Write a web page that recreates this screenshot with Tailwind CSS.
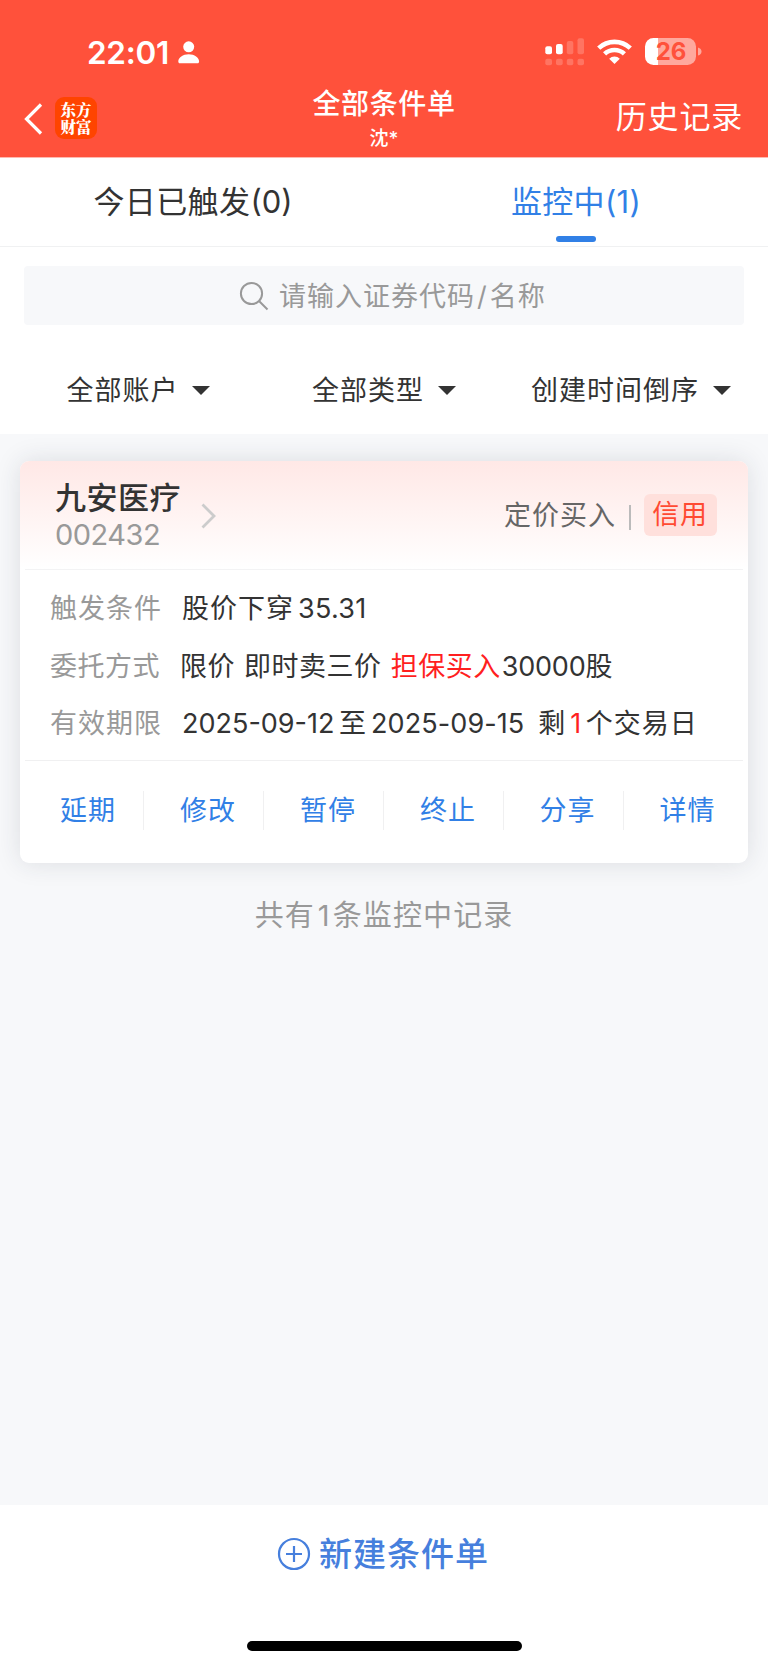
<!DOCTYPE html>
<html lang="zh-CN">
<head>
<meta charset="utf-8">
<title>全部条件单</title>
<script src="https://cdn.jsdelivr.net/npm/@tailwindcss/browser@4"></script>
</head>
<body class="bg-[#f7f8fa]">
<div class="flex h-[1665px] w-[768px] flex-col overflow-hidden bg-[#f7f8fa] font-['Inter','Noto_Sans_CJK_SC',sans-serif] whitespace-nowrap text-[#333]">

  <header class="h-[158px] shrink-0 border-b border-[#ffb9b0] bg-[#ff513b] text-white">
    <!-- status bar -->
    <div class="flex h-[85px] items-start pl-[87px]">
      <div class="mt-[33px] w-[86px] text-[31.500px] leading-[40px] font-semibold tracking-[-0.300px]">22:01</div>
      <svg class="mt-[41px] ml-[5px]" width="22" height="23" viewBox="0 0 22 23" fill="currentColor"><circle cx="10.7" cy="5.8" r="5.5"/><path d="M.3 20.5c0-4 4.6-7.3 10.4-7.3s10.4 3.300 10.400 7.300c0 1-.6 1.800-1.600 1.800H1.900c-1 0-1.600-.8-1.600-1.800z"/></svg>
      <svg class="mt-[38px] ml-[345px]" width="40" height="28" viewBox="0 0 40 28" fill="currentColor"><rect x="0.3" y="8.300" width="6.700" height="8" rx="2"/><rect x="11" y="6" width="6.700" height="10.300" rx="2"/><g opacity=".2"><rect x="21.800" y="3" width="6.500" height="13.300" rx="2"/><rect x="32.500" y="0.300" width="6.500" height="16" rx="2"/><rect x="0.300" y="20.700" width="6.700" height="6.500" rx="2"/><rect x="11" y="20.700" width="6.700" height="6.500" rx="2"/><rect x="21.800" y="20.700" width="6.500" height="6.500" rx="2"/><rect x="32.500" y="20.700" width="6.500" height="6.500" rx="2"/></g></svg>
      <svg class="mt-[38px] ml-[12px]" width="36" height="27" viewBox="0 0 36 27" fill="none" stroke="currentColor" stroke-width="4.600"><path d="M1.700 10.200a23 23 0 0 1 31.600 0"/><path d="M7.600 15.900a14.500 14.500 0 0 1 19.800 0"/><path d="M17.500 26l-5.300-5.300a7.700 7.700 0 0 1 10.600 0z" fill="currentColor" stroke="none"/></svg>
      <div class="mt-[38px] ml-[12px] flex h-[27px] w-[51px] items-center justify-center overflow-hidden rounded-[8.500px] bg-[linear-gradient(to_right,#fff_13px,#ffa89d_13px)] pl-px text-[24px] leading-none font-bold text-[#ff513b]">26</div>
      <svg class="mt-[47px] ml-[1.500px]" width="4" height="9" viewBox="0 0 4 9"><path d="M0 0.500Q3.500 1.500 3.500 4.500T0 8.500z" fill="#ffa89d"/></svg>
    </div>
    <!-- navigation bar -->
    <div class="grid h-[72px] grid-cols-3">
      <div class="flex items-start pl-[24px]">
        <svg class="mt-[18px]" width="19" height="32" viewBox="0 0 19 32" fill="none" stroke="currentColor" stroke-width="3.200"><path d="M17 1.500L2.500 16L17 30.500"/></svg>
        <div class="mt-[12px] ml-[12px] h-[42px] w-[42px] rounded-[9px] bg-[#ff4400] pt-[3.500px] text-center font-['Noto_Serif_CJK_SC','Noto_Sans_CJK_SC',serif] text-[15.500px] leading-[17.500px] font-black">东方<br>财富</div>
      </div>
      <div class="flex flex-col items-center">
        <div class="mt-[1px] text-[28px] leading-[37px] font-medium tracking-[0.600px]">全部条件单</div>
        <div class="mt-[5px] text-[19px] leading-[22px] font-medium">沈*</div>
      </div>
      <div class="pt-[12px] pr-[25px] text-right text-[31px] leading-[40px] tracking-[0.800px]">历史记录</div>
    </div>
  </header>

  <nav class="grid h-[89px] shrink-0 grid-cols-2 border-b border-[#f0f1f2] bg-white text-center text-[31px] leading-[40px]">
    <div class="pt-[24px] pl-[2px] tracking-[0.400px]">今日已触发<span class="tracking-normal">(0)</span></div>
    <div class="flex flex-col items-center pt-[24px] text-[#3180e6]">
      <div class="tracking-[0.300px]">监控中(1)</div>
      <div class="mt-[14px] h-[6px] w-[39.500px] rounded-full bg-[#3180e6]"></div>
    </div>
  </nav>

  <section class="h-[186.500px] shrink-0 bg-white pt-[19px]">
    <div class="mx-[24px] flex h-[59px] items-center rounded-[4px] bg-[#f7f8fa] pl-[215px] text-[27px] tracking-[1px] text-[#999]">
      <svg width="30" height="30" viewBox="0 0 30 30" fill="none" stroke="currentColor" stroke-width="2"><circle cx="12.500" cy="12.500" r="10.600"/><path d="M20 20l8.500 8.500"/></svg>
      <span class="mt-[2px] ml-[10px] leading-[40px]">请输入证券代码<span class="mx-[2px]">/</span>名称</span>
    </div>
    <div class="mt-[45px] flex items-center text-[27px] leading-[42px] tracking-[1px]">
      <div class="flex w-[246px] items-center pl-[66.500px]">全部账户<svg class="ml-[13.500px]" width="18" height="10" viewBox="0 0 18 10" fill="#333"><path d="M0 0h18L9 9z"/></svg></div>
      <div class="flex w-[218px] items-center pl-[66px]">全部类型<svg class="ml-[14px]" width="18" height="10" viewBox="0 0 18 10" fill="#333"><path d="M0 0h18L9 9z"/></svg></div>
      <div class="flex items-center pl-[67px]">创建时间倒序<svg class="ml-[14px]" width="18" height="10" viewBox="0 0 18 10" fill="#333"><path d="M0 0h18L9 9z"/></svg></div>
    </div>
  </section>

  <main class="flex-1 px-[20px] pt-[27px]">
    <article class="h-[402.500px] rounded-[9px] bg-white shadow-[0_0_26px_rgba(40,50,60,0.13)]">
      <div class="flex h-[108px] items-start rounded-t-[9px] bg-linear-to-b from-[#ffe8e6] to-white">
        <div class="w-[142px] pt-[17px] pl-[35px]">
          <div class="text-[31px] leading-[40px] font-medium tracking-[0.500px]">九安医疗</div>
          <div class="text-[29px] leading-[34px] font-normal tracking-[-0.500px] text-[#999]">002432</div>
        </div>
        <svg class="mt-[42px] ml-[39px]" width="16" height="26" viewBox="0 0 16 26" fill="none" stroke="#ccc" stroke-width="2.800"><path d="M1.500 1.500L13 13L1.500 24.500"/></svg>
        <div class="mt-[35px] ml-auto text-[27px] leading-[40px] tracking-[1px] text-[#666]">定价买入</div>
        <div class="mt-[44px] ml-[13px] h-[25px] w-[2px] bg-[#bbb]"></div>
        <div class="mt-[33px] mr-[31px] ml-[13px] h-[42px] w-[73px] rounded-[6px] bg-[#ffe0dc] pr-px text-center text-[27px] leading-[42px] tracking-[0.800px] text-[#ff4a32]">信用</div>
      </div>
      <div class="mx-[5px] h-px bg-[#f3f3f4]"></div>
      <div class="h-[190.500px] pt-[10px] pl-[30px] text-[27px] leading-[57.500px] tracking-[1px]">
        <div class="flex"><span class="w-[132px] text-[#999]">触发条件</span><span>股价下穿<span class="ml-[4px] tracking-[0.300px]">35.31</span></span></div>
        <div class="flex pt-[0.500px]"><span class="w-[130px] tracking-[0.500px] text-[#999]">委托方式</span><span class="tracking-[0.500px]">限价 <span class="ml-px">即时卖三价</span> <span class="ml-px text-[#ff1f1f]">担保买入</span><span class="ml-px tracking-[-0.200px]">30000</span>股</span></div>
        <div class="flex"><span class="w-[132px] text-[#999]">有效期限</span><span><span class="tracking-normal">2025-09-12</span><span class="mr-[5px] ml-[4.500px] tracking-normal">至</span><span class="tracking-[0.100px]">2025-09-15</span><span class="ml-[14px]">剩</span><span class="mr-[3.500px] ml-[4px] text-[#ff1f1f]">1</span>个交易日</span></div>
      </div>
      <div class="mx-[5px] h-px bg-[#f0f0f1]"></div>
      <div class="ml-[4px] grid w-[720px] grid-cols-6 pt-[29.500px] text-center text-[27px] leading-[39px] tracking-[1px] text-[#3180e6]">
        <div class="border-r border-[#f0f0f1] pl-[9px]">延期</div>
        <div class="border-r border-[#f0f0f1] pl-[9px]">修改</div>
        <div class="border-r border-[#f0f0f1] pl-[9px]">暂停</div>
        <div class="border-r border-[#f0f0f1] pl-[9px]">终止</div>
        <div class="border-r border-[#f0f0f1] pl-[8px]">分享</div>
        <div class="pl-[7px]">详情</div>
      </div>
    </article>
    <p class="mt-[32.500px] text-center text-[29px] leading-[40px] tracking-[1.100px] text-[#999]">共有<span class="mr-[2px] ml-[3px]">1</span>条监控中记录</p>
  </main>

  <footer class="flex h-[160.500px] shrink-0 flex-col items-center bg-white">
    <div class="mt-[29px] flex h-[40px] items-center pr-[2px] text-[33px] leading-[40px] font-medium tracking-[1px] text-[#467fdd]">
      <svg width="34" height="34" viewBox="0 0 34 34" fill="none" stroke="currentColor" stroke-width="2.200"><circle cx="17" cy="17" r="15"/><path d="M9 17h16M17 9v16"/></svg>
      <span class="ml-[8px]">新建条件单</span>
    </div>
    <div class="mt-[67.500px] h-[10px] w-[275px] rounded-full bg-black"></div>
  </footer>
</div>
</body>
</html>
